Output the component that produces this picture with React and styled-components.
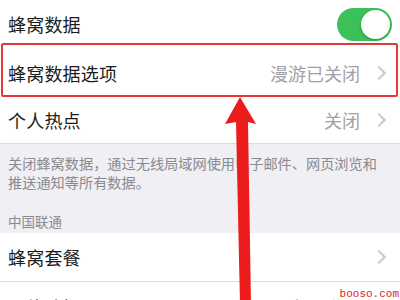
import React from "react";
import styled, { createGlobalStyle } from "styled-components";

const GlobalStyle = createGlobalStyle`
	html, body {
		margin: 0;
		padding: 0;
		background: #fff;
	}
	body {
		font-family: "Noto Sans CJK SC", "Noto Sans", sans-serif;
		overflow: hidden;
	}
`;

const Page = styled.div`
	position: relative;
	width: 400px;
	height: 300px;
	overflow: hidden;
	background: #fff;
`;

const Group = styled.div`
	background: #fff;
`;

const Row = styled.div`
	position: relative;
	display: flex;
	align-items: center;
	justify-content: space-between;
	height: ${({ h }) => h || 48}px;
	padding: 0 8px 0 8px;
	box-sizing: border-box;
	border-bottom: ${({ divider }) => (divider ? "1px solid #dcdce0" : "none")};
`;

const Label = styled.span`
	font-size: 18px;
	color: #1c1c1c;
	letter-spacing: 0.2px;
`;

const Right = styled.div`
	display: flex;
	align-items: center;
	gap: 14px;
	padding-right: 4px;
`;

const Value = styled.span`
	font-size: 18px;
	color: #a2a2a6;
`;

const Chevron = styled.span`
	width: 8px;
	height: 8px;
	border-top: 2px solid #c9c9cd;
	border-right: 2px solid #c9c9cd;
	transform: rotate(45deg);
	margin-right: 4px;
`;

const Switch = styled.div`
	position: relative;
	width: 55px;
	height: 33px;
	border-radius: 17px;
	background: #3cc05a;
	&::after {
		content: "";
		position: absolute;
		right: 2px;
		top: 2px;
		width: 29px;
		height: 29px;
		border-radius: 50%;
		background: #fff;
		box-shadow: 0 1px 3px rgba(0, 0, 0, 0.25);
	}
`;

const Highlight = styled.div`
	position: absolute;
	left: 1px;
	right: 2px;
	top: -5px;
	bottom: 0;
	border: 2px solid #e2383a;
	border-radius: 2px;
	pointer-events: none;
`;

const Section = styled.div`
	background: #efeff4;
	padding: 10px 8px 0 8px;
	height: 90px;
	box-sizing: border-box;
	border-top: 1px solid #dcdce0;
`;

const Note = styled.p`
	margin: 0;
	font-size: 14.2px;
	line-height: 19px;
	color: #8a8a8e;
`;

const Header = styled.p`
	margin: 19px 0 0 0;
	font-size: 13.5px;
	color: #8a8a8e;
`;

const Watermark = styled.span`
	position: absolute;
	right: 0;
	bottom: 0;
	font-family: "Liberation Mono", monospace;
	font-size: 11px;
	color: #d8262a;
	background: #fff;
	padding: 0 1px;
`;

const Arrow = styled.svg`
	position: absolute;
	left: 220px;
	top: 94px;
	pointer-events: none;
`;

export default function App() {
	return (
		<Page>
			<GlobalStyle />
			<Group>
				<Row>
					<Label>蜂窝数据</Label>
					<Switch />
				</Row>
				<Row h={49}>
					<Label>蜂窝数据选项</Label>
					<Right>
						<Value>漫游已关闭</Value>
						<Chevron />
					</Right>
					<Highlight />
				</Row>
				<Row h={46}>
					<Label>个人热点</Label>
					<Right>
						<Value>关闭</Value>
						<Chevron />
					</Right>
				</Row>
			</Group>
			<Section>
				<Note>
					关闭蜂窝数据，通过无线局域网使用电子邮件、网页浏览和
					<br />
					推送通知等所有数据。
				</Note>
				<Header>中国联通</Header>
			</Section>
			<Group>
				<Row h={49} divider>
					<Label>蜂窝套餐</Label>
					<Right>
						<Chevron />
					</Right>
				</Row>
				<Row h={50}>
					<Label>网络选择</Label>
					<Right>
						<Value>中国联通</Value>
						<Chevron />
					</Right>
				</Row>
			</Group>
			<Arrow width="40" height="210" viewBox="0 0 40 210">
				<polygon points="20,3 36,30 28,28 31,210 20,210 16,28 5,30" fill="#ec1c1c" />
			</Arrow>
			<Watermark>booso.com</Watermark>
		</Page>
	);
}
